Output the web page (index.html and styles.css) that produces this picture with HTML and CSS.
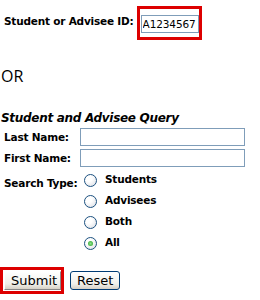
FILE: index.html
```html
<!DOCTYPE html>
<html>
<head>
    <title>Student Query</title>
    <link rel="stylesheet" href="styles.css">
</head>
<body>
    <div class="id-row">
        <label for="sid">Student or Advisee ID:</label>
        <span class="highlight id-box">
            <input type="text" id="sid" value="A1234567">
        </span>
    </div>

    <p class="or">OR</p>

    <h2>Student and Advisee Query</h2>
    <div class="query">
        <label for="last">Last Name:</label>
        <input type="text" id="last">
        <label for="first">First Name:</label>
        <input type="text" id="first">
        <span class="type-label">Search Type:</span>
        <div class="radios">
            <label class="radio"><span class="dot"></span>Students</label>
            <label class="radio"><span class="dot"></span>Advisees</label>
            <label class="radio"><span class="dot"></span>Both</label>
            <label class="radio"><span class="dot checked"></span>All</label>
        </div>
    </div>

    <div class="buttons">
        <span class="highlight submit-box"><button>Submit</button></span>
        <button>Reset</button>
    </div>
</body>
</html>
```

FILE: styles.css
```css
body { margin: 0; font-family: "DejaVu Sans", Verdana, sans-serif; font-size: 10.5px; color: #000; background: #fff; width: 260px; height: 300px; overflow: hidden; }
label, .type-label { font-weight: bold; letter-spacing: -0.2px; white-space: nowrap; }
.highlight { border: 3px solid #dd0000; display: inline-block; }

.id-row { display: flex; align-items: center; padding: 6px 0 0 4px; }
.id-row label { margin-right: 3px; margin-top: -4px; }
.id-box { padding: 6px 0 4px 1px; }
.id-box input { width: 58px; height: 18px; box-sizing: border-box; padding: 0 0 0 1px; border: 1px solid #7f9db9; font: 10.5px "DejaVu Sans", Verdana, sans-serif; letter-spacing: -0.1px; }

.or { font-family: "Open Sans", sans-serif; font-size: 16px; margin: 25px 0 0 1px; line-height: 22px; }

h2 { font-size: 12px; font-style: italic; margin: 24px 0 0 1px; line-height: 15px; letter-spacing: -0.3px; }

.query { display: grid; grid-template-columns: 76px 165px; row-gap: 3px; padding-left: 4px; margin-top: 2px; }
.query label, .type-label { line-height: 18px; }
.query input { height: 18px; box-sizing: border-box; border: 1px solid #7f9db9; }
.type-label { margin-top: 4px; }
.radios { display: flex; flex-direction: column; gap: 7px; margin-top: 4px; }
.radio { display: flex; align-items: flex-end; line-height: 12px; height: 14px; }
.dot { width: 11px; height: 11px; border: 1px solid #1c5180; border-radius: 50%; background: radial-gradient(circle at 35% 30%, #fff 30%, #d8dbe2 100%); margin: 0 8px 0 4px; align-self: flex-start; position: relative; }
.dot.checked::after { content: ""; position: absolute; left: 3px; top: 3px; width: 5px; height: 5px; border-radius: 50%; background: radial-gradient(circle, #8ee08e, #21a121); }

.buttons { display: flex; align-items: center; gap: 6px; margin-top: 16px; }
.submit-box { padding: 1px 0 1px 1px; }
button { font: 13px "DejaVu Sans", Verdana, sans-serif; height: 19px; padding: 0 6px; border: 1px solid #003c74; border-radius: 3px; background: linear-gradient(#fff, #f0f0ea 70%, #d6d0c5); color: #000; }
.submit-box button { border-color: #fff #888 #888 #fff; border-radius: 0; width: 57px; }
```
